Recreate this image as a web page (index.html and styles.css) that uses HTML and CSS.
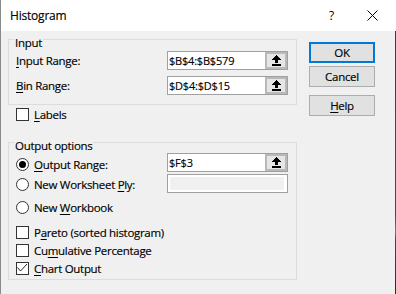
FILE: index.html
```html
<!DOCTYPE html>
<html lang="en">
<head>
<meta charset="utf-8">
<title>Histogram</title>
<link rel="stylesheet" href="styles.css">
</head>
<body>
<div class="window">
  <div class="titlebar">
    <span class="title">Histogram</span>
    <div class="title-actions">
      <span class="qmark">?</span>
      <svg class="close" width="11" height="11" viewBox="0 0 11 11"><path d="M0.5 0.5 L10.5 10.5 M10.5 0.5 L0.5 10.5" stroke="#000" stroke-width="1" fill="none"/></svg>
    </div>
  </div>
  <div class="content">
    <div class="main">
      <div class="group group-input">
        <span class="legend">Input</span>
        <div class="form-grid input-grid">
          <span class="lbl"><u>I</u>nput Range:</span>
          <div class="field"><span class="val">$B$4:$B$579</span><span class="ref-btn"><svg width="9" height="11" viewBox="0 0 9 11" shape-rendering="crispEdges"><rect x="4" y="0" width="1" height="1"/><rect x="3" y="1" width="3" height="1"/><rect x="2" y="2" width="5" height="1"/><rect x="1" y="3" width="7" height="1"/><rect x="0" y="4" width="9" height="1"/><rect x="3" y="5" width="3" height="3"/><rect x="0" y="9" width="9" height="2"/></svg></span></div>
          <span class="lbl"><u>B</u>in Range:</span>
          <div class="field"><span class="val">$D$4:$D$15</span><span class="ref-btn"><svg width="9" height="11" viewBox="0 0 9 11" shape-rendering="crispEdges"><rect x="4" y="0" width="1" height="1"/><rect x="3" y="1" width="3" height="1"/><rect x="2" y="2" width="5" height="1"/><rect x="1" y="3" width="7" height="1"/><rect x="0" y="4" width="9" height="1"/><rect x="3" y="5" width="3" height="3"/><rect x="0" y="9" width="9" height="2"/></svg></span></div>
        </div>
      </div>
      <div class="opt labels-row"><span class="cb"></span><span><u>L</u>abels</span></div>
      <div class="group group-output">
        <span class="legend">Output options</span>
        <div class="form-grid output-grid">
          <div class="opt"><span class="radio checked"></span><span><u>O</u>utput Range:</span></div>
          <div class="field"><span class="val">$F$3</span><span class="ref-btn"><svg width="9" height="11" viewBox="0 0 9 11" shape-rendering="crispEdges"><rect x="4" y="0" width="1" height="1"/><rect x="3" y="1" width="3" height="1"/><rect x="2" y="2" width="5" height="1"/><rect x="1" y="3" width="7" height="1"/><rect x="0" y="4" width="9" height="1"/><rect x="3" y="5" width="3" height="3"/><rect x="0" y="9" width="9" height="2"/></svg></span></div>
          <div class="opt"><span class="radio"></span><span>New Worksheet <u>P</u>ly:</span></div>
          <div class="field disabled"><span class="inner"></span></div>
          <div class="opt span2"><span class="radio"></span><span>New <u>W</u>orkbook</span></div>
        </div>
        <div class="checks">
          <div class="opt"><span class="cb"></span><span>P<u>a</u>reto (sorted histogram)</span></div>
          <div class="opt"><span class="cb"></span><span>Cu<u>m</u>ulative Percentage</span></div>
          <div class="opt"><span class="cb"><svg width="13" height="13" viewBox="0 0 13 13"><polyline points="1.5,5.5 4.5,9 11,2" fill="none" stroke="#222" stroke-width="1"/></svg></span><span><u>C</u>hart Output</span></div>
        </div>
      </div>
    </div>
    <div class="buttons">
      <div class="btn default">OK</div>
      <div class="btn">Cancel</div>
      <div class="btn help"><u>H</u>elp</div>
    </div>
  </div>
</div>
</body>
</html>
```
FILE: styles.css
```css
* { box-sizing: border-box; }
html, body { margin: 0; padding: 0; }
body {
  width: 396px;
  height: 294px;
  overflow: hidden;
  background: linear-gradient(#ffffff 0, #ffffff 31px, #4a3a2a 31px, #3b4a3c 120px, #1f5a3c 213px, #777 232px, #1f5a3c 240px, #333 278px, #1e2a55 288px);
  font-family: "Open Sans", sans-serif;
  font-size: 11.5px;
  letter-spacing: -0.3px;
  color: #000;
  -webkit-text-stroke: 0.15px #000;
}
u { text-decoration-thickness: 1px; text-underline-offset: 2px; }
.window {
  width: 395px;
  height: 294px;
  background: #f0f0f0;
  border-left: 1px solid #8a8a8a;
  display: flex;
  flex-direction: column;
}
.titlebar {
  height: 31px;
  flex: none;
  background: #fff;
  display: flex;
  align-items: center;
  padding-left: 9px;
  padding-right: 17px;
}
.title { font-size: 12px; line-height: 16px; letter-spacing: -0.2px; }
.title-actions { margin-left: auto; display: flex; align-items: center; }
.qmark { font-size: 12px; line-height: 16px; width: 7px; margin-right: 31px; -webkit-text-stroke: 0; }
.close { display: block; }
.content { display: flex; padding: 8px 0 0 7px; }
.main { width: 289px; flex: none; }
.group { border: 1px solid #dcdcdc; }
.legend {
  display: block;
  width: fit-content;
  height: 15px;
  line-height: 15px;
  margin: -5px 0 0 5px;
  padding: 0 1px;
  background: #f0f0f0;
}
.form-grid {
  display: grid;
  grid-template-columns: 151px 121px;
  padding-left: 7px;
}
.input-grid { margin-top: 1px; row-gap: 6px; grid-auto-rows: 19px; padding-bottom: 9px; }
.lbl { align-self: center; line-height: 15px; }
.field {
  display: flex;
  align-items: stretch;
  height: 19px;
  border: 1px solid #a0a0a0;
  background: #fff;
}
.val { flex: 1; padding-left: 1px; line-height: 17px; font-size: 11px; letter-spacing: -0.2px; }
.ref-btn {
  width: 22px;
  flex: none;
  display: flex;
  align-items: center;
  justify-content: center;
  border: 2px solid #b9b9b9;
  background: #e6e6e6;
}
.ref-btn svg { display: block; fill: #000; }
.field.disabled { padding: 2px 3px 2px 2px; }
.field.disabled .inner { flex: 1; background: #f0f0f0; }
.opt { display: flex; align-items: center; gap: 5px; line-height: 15px; }
.cb {
  width: 13px; height: 13px; flex: none;
  border: 1px solid #333;
  background: #fff;
}
.cb svg { display: block; margin: -1px; }
.radio {
  width: 13px; height: 13px; flex: none;
  border: 1px solid #333;
  border-radius: 50%;
  background: #fff;
  display: flex; align-items: center; justify-content: center;
}
.radio.checked::after {
  content: "";
  width: 7px; height: 7px;
  border-radius: 50%;
  background: #000;
}
.labels-row { margin-top: 2px; margin-left: 8px; height: 15px; }
.group-output { margin-top: 20px; height: 138px; }
.output-grid { margin-top: 0; grid-template-rows: 19px 20px 22px; row-gap: 2px; padding-left: 7px; }
.output-grid > .opt:first-child { padding-top: 3px; }
.span2 { grid-column: 1 / span 2; }
.checks { display: flex; flex-direction: column; gap: 3px; padding-left: 7px; margin-top: 7px; }
.checks .opt { height: 15px; }
.buttons {
  margin-left: 12px;
  padding-top: 3px;
  display: flex;
  flex-direction: column;
  width: 66px;
}
.btn {
  height: 21px;
  border: 1px solid #adadad;
  background: #e1e1e1;
  display: flex;
  align-items: center;
  justify-content: center;
  line-height: 15px;
}
.btn.default { border: 2px solid #0078d7; }
.btn + .btn { margin-top: 3px; }
.btn.help { margin-top: 8px; }
```
